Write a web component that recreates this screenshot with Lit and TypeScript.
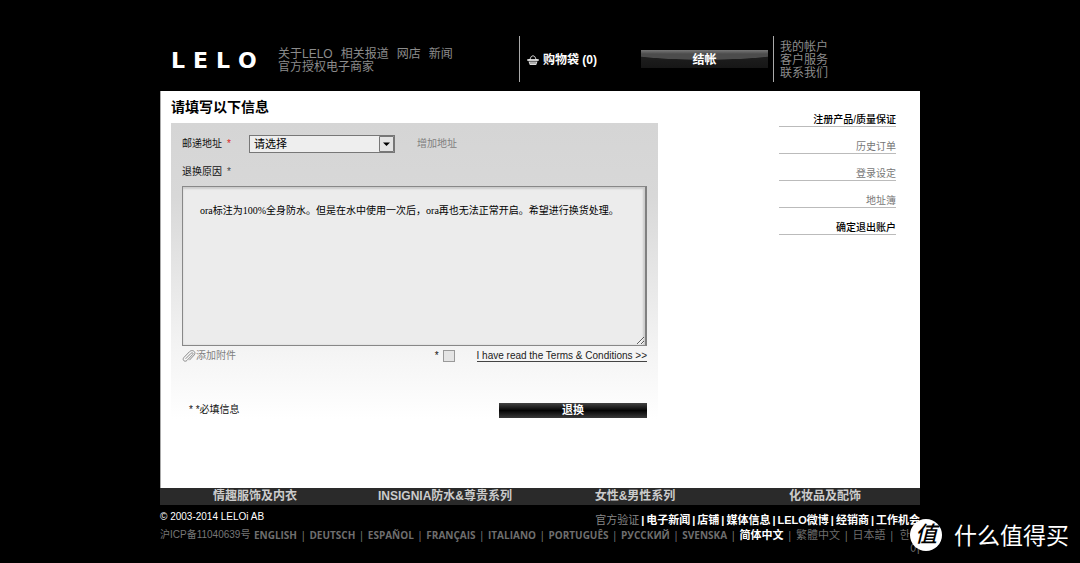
import { LitElement, html, css, svg } from "lit";
import { customElement, state } from "lit/decorators.js";

const bagIcon = svg`<svg class="bag-icon" viewBox="0 0 12 11" width="12" height="11" aria-hidden="true">
  <path d="M2.600 5 L4.200 1.600 Q6 -0.200 7.800 1.600 L9.400 5" fill="none" stroke="#ccc" stroke-width="1"/>
  <path d="M0.300 4.200h11.400v1.600h-11.400z" fill="#fff"/>
  <path d="M1.500 6.400h9l-1.300 3.600h-6.400z" fill="#ddd"/>
  <path d="M4 7v2M6 7v2M8 7v2" stroke="#444" stroke-width="0.600"/>
</svg>`;

const clipIcon = svg`<svg viewBox="0 0 14 14" width="14" height="14" aria-hidden="true">
  <path d="M3.6 9.8 L9.2 4.2 C10.4 3 11.8 4.4 10.6 5.6 L5 11.4 C3 13.4 -0.2 11.2 1.8 8.6 L7.6 2.6 C10 0.2 14.4 2.4 12.4 5.8 L7.4 11.2" fill="none" stroke="#8a8a8a" stroke-width="1"/>
</svg>`;

@customElement("app-header")
class AppHeader extends LitElement {
  static styles = css`
    :host { display: block; }
    a { color: inherit; text-decoration: none; }
    .bar { display: flex; align-items: center; height: 46px; padding: 36px 0 9px; color: #8c8c8c; font-size: 12px; line-height: 13px; }
    .logo { display: block; margin-left: 11px; overflow: visible; }
    .logo text { font: 700 22px "DejaVu Sans", sans-serif; fill: #fff; }
    .about { flex: 1; margin-left: 17px; padding-top: 3px; }
    .row { display: flex; gap: 8px; }
    .bag { display: flex; align-items: center; gap: 4px; align-self: stretch; width: 114px; padding: 2px 0 0 7px; margin: 0; box-sizing: border-box; width: 122px; border-left: 1px solid #aaa; color: #fff; font-weight: 700; font-size: 12px; }
    .checkout { width: 127px; height: 18px; padding: 2px 0 0; border: 0; color: #fff; font: 700 12px/16px "Liberation Sans", "Noto Sans CJK SC", sans-serif;
      background: linear-gradient(#777, transparent 4px), radial-gradient(ellipse 90px 10px at 50% 0, #4c4c4c 0 94%, transparent 100%), linear-gradient(#222, #161616); }
    .account { display: flex; flex-direction: column; justify-content: center; align-self: stretch; width: 140px; margin: 0 0 0 5px; padding-left: 6px; border-left: 1px solid #aaa; }
    .account-list { display: flex; flex-direction: column; padding-top: 3px; }
  `;
  render() {
    return html`<header class="bar">
      <a href="#" aria-label="LELO"><svg class="logo" width="90" height="30" viewBox="0 0 90 30">
        <text x="0 22 45 67" y="24">LELO</text>
      </svg></a>
      <nav class="about">
        <div class="row"><a href="#">关于LELO</a><a href="#">相关报道</a><a href="#">网店</a><a href="#">新闻</a></div>
        <div class="row"><a href="#">官方授权电子商家</a></div>
      </nav>
      <a class="bag" href="#">${bagIcon}<span>购物袋 (0)</span></a>
      <button class="checkout" type="button">结帐</button>
      <nav class="account"><div class="account-list"><a href="#">我的帐户</a><a href="#">客户服务</a><a href="#">联系我们</a></div></nav>
    </header>`;
  }
}

@customElement("return-form")
class ReturnForm extends LitElement {
  static styles = css`
    :host { display: block; flex: 1; }
    * { box-sizing: border-box; }
    h1 { margin: 0 0 8px; font-size: 14px; line-height: 16px; }
    .panel { padding: 12px 11px 0; font-size: 10px; line-height: 18px; color: #111;
      background: linear-gradient(#d5d5d5, #d8d8d8 25%, #f3f3f3 75%, #fff); }
    .line { display: flex; align-items: center; }
    .address { gap: 22px; margin-bottom: 10px; }
    .label { width: 45px; white-space: nowrap; }
    .req { color: #d22; margin-left: 5px; }
    .dim { color: #444; margin-left: 5px; }
    a { text-decoration: none; color: #808080; }
    select { appearance: none; width: 146px; height: 18px; padding: 0 4px; border: 1px solid #777; border-radius: 0; color: #000;
      font: 11px/14px "Liberation Sans", "Noto Sans CJK SC", sans-serif;
      background: url("data:image/svg+xml,%3Csvg xmlns='http://www.w3.org/2000/svg' width='15' height='16'%3E%3Cpath d='M.5.5h14v15H.5z' fill='%23e4e4e4' stroke='%23777'/%3E%3Cpath d='M4 6.5h7L7.500 10z'/%3E%3C/svg%3E") right center no-repeat #eee; }
    textarea { display: block; width: 100%; height: 160px; margin: 5px 0 0; padding: 16px 17px; border: 1px solid #888; border-right: 2px solid #808080; border-radius: 0; outline: 0; color: #000;
      background: #ececec; box-shadow: inset 0 2px 2px #ccc, inset -2px 0 2px #ccc;
      font: 10px/15px "Liberation Serif", "Noto Sans CJK SC", sans-serif; }
    .below { justify-content: space-between; height: 20px; }
    .attach { display: flex; align-items: center; }
    .terms { display: flex; align-items: center; }
    input { appearance: none; width: 12px; height: 12px; margin: 0 22px 0 4px; border: 1px solid #999; background: #e4e4e4; }
    input:checked { background: #555; }
    .terms a { color: #222; line-height: 11px; border-bottom: 1px solid #444; }
    .end { justify-content: space-between; padding: 35px 0 0 7px; }
    .submit { width: 148px; height: 15px; padding: 0; border: 0; color: #fff; font: 700 11px/15px "Liberation Sans", "Noto Sans CJK SC", sans-serif;
      background: linear-gradient(#444, #050505 50%, #3a3a3a); }
  `;
  render() {
    return html`<h1>请填写以下信息</h1>
      <form class="panel">
        <div class="line address">
          <label class="label" for="addr">邮递地址<span class="req">*</span></label>
          <select id="addr"><option>请选择</option></select>
          <a href="#">增加地址</a>
        </div>
        <label for="reason">退换原因<span class="dim">*</span></label>
        <textarea id="reason" .value=${"ora标注为100%全身防水。但是在水中使用一次后，ora再也无法正常开启。希望进行换货处理。"}></textarea>
        <div class="line below">
          <a class="attach" href="#">${clipIcon}添加附件</a>
          <div class="terms"><label for="agree">*</label><input id="agree" type="checkbox" aria-label="I have read the Terms &amp; Conditions"><a href="#">I have read the Terms &amp; Conditions &gt;&gt;</a></div>
        </div>
        <div class="line end"><span>* *必填信息</span><button class="submit" type="button">退换</button></div>
      </form>`;
  }
}

@customElement("side-menu")
class SideMenu extends LitElement {
  @state() items = [
    { text: "注册产品/质量保证", strong: true },
    { text: "历史订单", strong: false },
    { text: "登录设定", strong: false },
    { text: "地址簿", strong: false },
    { text: "确定退出账户", strong: true },
  ];
  static styles = css`
    :host { display: block; width: 117px; }
    nav { display: flex; flex-direction: column; gap: 14px; padding-top: 15px; font-size: 10px; line-height: 12px; text-align: right; }
    a { color: #777; text-decoration: none; border-bottom: 1px solid #bbb; }
    .strong { color: #000; font-weight: 500; }
  `;
  render() {
    return html`<nav>${this.items.map((i) => html`<a href="#" class=${i.strong ? "strong" : ""}>${i.text}</a>`)}</nav>`;
  }
}

@customElement("app-footer")
class AppFooter extends LitElement {
  static styles = css`
    :host { display: block; }
    a { color: inherit; text-decoration: none; }
    .cats { display: grid; grid-template-columns: repeat(4, 1fr); background: #2a2a2a; color: #ccc; font-size: 12px; font-weight: 700; line-height: 17px; text-align: center; }
    .row { display: flex; justify-content: space-between; }
    .info { padding-top: 6px; color: #fff; font-size: 11px; line-height: 16px; }
    .copy { font-size: 10px; line-height: 12px; }
    .links { display: flex; gap: 2px; padding-top: 1px; font-weight: 700; }
    .links, .langs { white-space: nowrap; }
    .plain { color: #888; font-weight: 400; }
    .langs { color: #6e6e6e; font-family: "Open Sans", "Noto Sans CJK SC", "Noto Sans CJK KR", sans-serif; font-size: 10px; line-height: 14px; font-weight: 700; }
    .icp { color: #777; font-family: "Liberation Sans", "Noto Sans CJK SC", sans-serif; font-weight: 400; }
    .cjk { font-size: 11px; font-weight: 400; }
    .on { color: #fff; font-weight: 700; }
    .last { width: 22px; font-size: 11px; font-weight: 400; white-space: normal; word-break: break-all; text-align: right; }
  `;
  render() {
    const cats = ["情趣服饰及内衣", "INSIGNIA防水&尊贵系列", "女性&男性系列", "化妆品及配饰"];
    const links = ["电子新闻", "店铺", "媒体信息", "LELO微博", "经销商", "工作机会"];
    const langs = [["ENGLISH", ""], ["DEUTSCH", ""], ["ESPAÑOL", ""], ["FRANÇAIS", ""], ["ITALIANO", ""], ["PORTUGUÊS", ""], ["РУССКИЙ", ""], ["SVENSKA", ""], ["简体中文", "cjk on"], ["繁體中文", "cjk"], ["日本語", "cjk"]];
    return html`<nav class="cats">${cats.map((c) => html`<a href="#">${c}</a>`)}</nav>
      <div class="row info"><span class="copy">© 2003-2014 LELOi AB</span>
        <nav class="links"><a class="plain" href="#">官方验证</a>${links.map((l) => html`<span>|</span><a href="#">${l}</a>`)}</nav></div>
      <nav class="row langs"><a class="icp" href="#">沪ICP备11040639号</a>
        ${langs.map(([l, c]) => html`<a href="#" class=${c}>${l}</a><span class="plain">|</span>`)}
        <a class="last" href="#">한국어</a></nav>`;
  }
}

@customElement("app-root")
class AppRoot extends LitElement {
  static styles = css`
    :host { display: block; position: relative; min-height: 100vh; background: #000; overflow: hidden; font-family: "Liberation Sans", "Noto Sans CJK SC", "Noto Sans CJK KR", sans-serif; }
    .page { width: 100%; max-width: 760px; margin: 0 auto; }
    .content { display: flex; gap: 121px; padding: 8px 24px 69px 10px; border-left: 1px solid #aaa; background: #fff; }
    .mark { position: absolute; right: 11px; bottom: 11px; display: flex; align-items: center; gap: 12px; color: #fff; font-size: 23px; line-height: 32px; }
    .disc { width: 32px; height: 32px; border-radius: 50%; background: #fff; color: #000; font-size: 22px; font-style: italic; font-weight: 500; text-align: center; }
    .name { padding-top: 2px; }
  `;
  render() {
    return html`<div class="page">
        <app-header></app-header>
        <main class="content"><return-form></return-form><side-menu></side-menu></main>
        <app-footer></app-footer>
      </div>
      <div class="mark"><span class="disc">值</span><span class="name">什么值得买</span></div>`;
  }
}
